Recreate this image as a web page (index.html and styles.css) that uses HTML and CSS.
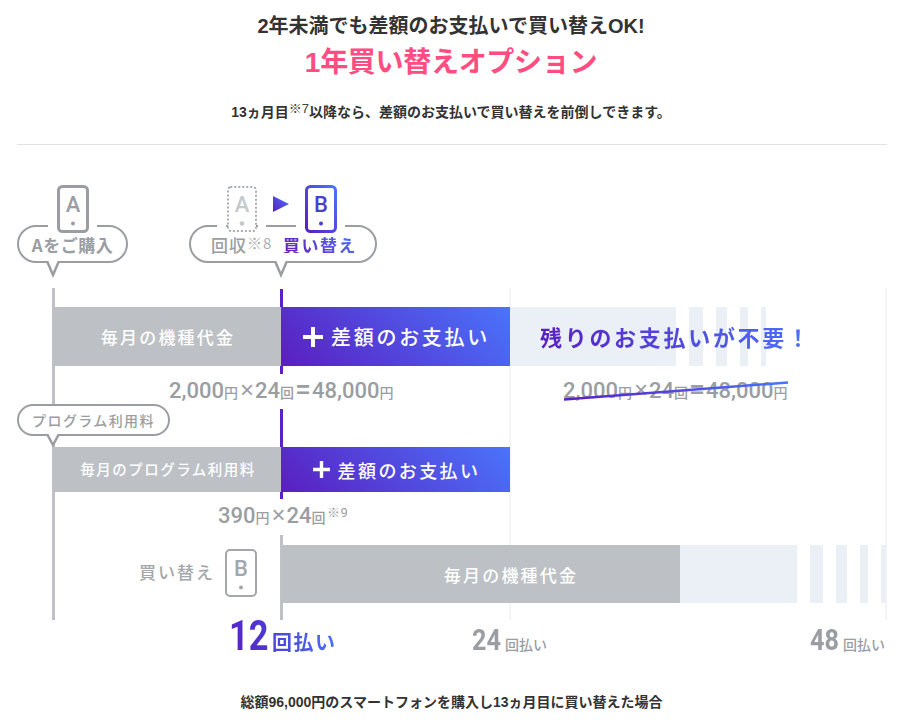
FILE: index.html
```html
<!DOCTYPE html>
<html lang="ja">
<head>
<meta charset="utf-8">
<title>1年買い替えオプション</title>
<link rel="stylesheet" href="styles.css">
</head>
<body>
<svg class="defs" width="0" height="0" aria-hidden="true">
  <defs>
    <linearGradient id="grad" x1="0" y1="1" x2="1" y2="0">
      <stop offset="0" stop-color="#5a1ec0"/>
      <stop offset="1" stop-color="#4a74fb"/>
    </linearGradient>
    <linearGradient id="gradLine" gradientUnits="userSpaceOnUse" x1="0" y1="0" x2="226" y2="0">
      <stop offset="0" stop-color="#5a1ec0"/>
      <stop offset="1" stop-color="#4a74fb"/>
    </linearGradient>
  </defs>
</svg>
<header class="intro">
  <p class="lead">2年未満でも差額のお支払いで買い替えOK!</p>
  <h1 class="title">1年買い替えオプション</h1>
  <p class="sub">13ヵ月目<sup class="note">※7</sup>以降なら、差額のお支払いで買い替えを前倒しできます。</p>
</header>
<hr class="rule">
<main class="chart">
  <i class="axis axis-start"></i>
  <i class="axis axis-swap-a"></i>
  <i class="axis axis-swap-b"></i>
  <i class="axis axis-swap-c"></i>
  <i class="axis axis-24"></i>
  <i class="axis axis-48"></i>

  <section class="heads">
    <div class="bubble bubble-a">
      <span class="bubble-text">Aをご購入</span>
      <svg class="tail" width="16" height="17" viewBox="0 0 16 17"><path d="M2 0 8 14 14 0" fill="#fff" stroke="#9a9ea3" stroke-width="2.5"/></svg>
    </div>
    <div class="phone-wrap phone-wrap-a">
      <svg class="phone" width="32" height="48" viewBox="0 0 32 48"><rect x="1.500" y="1.500" width="29" height="45" rx="4" fill="#fff" stroke="#9a9ea3" stroke-width="3"/><circle cx="16" cy="38.500" r="2" fill="#9a9ea3"/></svg>
      <span class="phone-letter letter-a">A</span>
    </div>

    <div class="bubble bubble-b">
      <span class="bubble-text recover">回収<small class="note-gray">※8</small></span>
      <span class="bubble-text buy">買い替え</span>
      <svg class="tail" width="16" height="17" viewBox="0 0 16 17"><path d="M2 0 8 14 14 0" fill="#fff" stroke="#9a9ea3" stroke-width="2.5"/></svg>
    </div>
    <div class="phone-wrap phone-wrap-old">
      <svg class="phone" width="32" height="48" viewBox="0 0 32 48"><rect x="2" y="2" width="28" height="44" rx="3" fill="#fff" stroke="#a9adb1" stroke-width="2" stroke-dasharray="0.500 3.500" stroke-linecap="round"/><circle cx="16" cy="38.500" r="2.300" fill="#c4c7ca"/></svg>
      <span class="phone-letter letter-old">A</span>
    </div>
    <svg class="arrow" width="16" height="16" viewBox="0 0 16 16"><path d="M0 0 16 8 0 16Z" fill="url(#grad)"/></svg>
    <div class="phone-wrap phone-wrap-new">
      <svg class="phone" width="32" height="48" viewBox="0 0 32 48"><rect x="1.500" y="1.500" width="29" height="45" rx="4" fill="#fff" stroke="url(#grad)" stroke-width="3"/><circle cx="16" cy="38.500" r="2" fill="#4a3fd0"/></svg>
      <span class="phone-letter letter-new">B</span>
    </div>
  </section>

  <section class="bars bars-1">
    <div class="seg seg-gray"><span class="seg-label">毎月の機種代金</span></div>
    <div class="seg seg-grad"><svg class="plus" width="20" height="20" viewBox="0 0 20 20"><path d="M8 0h4v8h8v4h-8v8H8v-8H0V8h8Z" fill="#fff"/></svg><span class="seg-label seg-label-lg">差額のお支払い</span></div>
    <div class="fade">
      <i class="stripe s166"></i><i class="stripe s14"></i><i class="stripe s11"></i><i class="stripe s8"></i><i class="stripe s5"></i>
      <strong class="no-more">残りのお支払いが不要！</strong>
    </div>
  </section>

  <section class="amounts amounts-1">
    <p class="amount"><b>2,000</b><small>円</small><span class="op">×</span><b>24</b><small>回</small><span class="op op-eq">=</span><b>48,000</b><small>円</small></p>
    <p class="amount amount-struck"><b>2,000</b><small>円</small><span class="op">×</span><b>24</b><small>回</small><span class="op op-eq">=</span><b>48,000</b><small>円</small>
      <svg class="strike" width="226" height="20" viewBox="0 0 226 20"><path d="M1 18.500 225 1.500" fill="none" stroke="url(#gradLine)" stroke-width="2.500"/></svg>
    </p>
  </section>

  <section class="fee-head">
    <div class="bubble bubble-fee">
      <span class="bubble-text fee-text">プログラム利用料</span>
      <svg class="tail" width="16" height="13" viewBox="0 0 16 13"><path d="M2 0 8 11 14 0" fill="#fff" stroke="#9a9ea3" stroke-width="2.5"/></svg>
    </div>
  </section>

  <section class="bars bars-2">
    <div class="seg seg-gray"><span class="seg-label seg-label-sm">毎月のプログラム利用料</span></div>
    <div class="seg seg-grad seg-grad-sm"><svg class="plus" width="17" height="17" viewBox="0 0 20 20"><path d="M8 0h4v8h8v4h-8v8H8v-8H0V8h8Z" fill="#fff"/></svg><span class="seg-label seg-label-md">差額のお支払い</span></div>
  </section>

  <section class="amounts amounts-2">
    <p class="amount"><b>390</b><small>円</small><span class="op">×</span><b>24</b><small>回</small><sup class="amount-note">※9</sup></p>
  </section>

  <section class="bars bars-3">
    <div class="swap-label">
      <span class="swap-text">買い替え</span>
      <span class="phone-inline">
        <svg class="phone" width="32" height="48" viewBox="0 0 32 48"><rect x="1" y="1" width="30" height="46" rx="4" fill="#fff" stroke="#a3a7ab" stroke-width="2"/><circle cx="16" cy="38.500" r="2" fill="#a3a7ab"/></svg>
        <span class="phone-letter letter-plain">B</span>
      </span>
    </div>
    <div class="seg seg-gray seg-long"><span class="seg-label">毎月の機種代金</span></div>
    <div class="fade fade-long">
      <i class="stripe s117"></i><i class="stripe s13"></i><i class="stripe s11"></i><i class="stripe s8"></i><i class="stripe s5"></i>
    </div>
  </section>

  <section class="ticks">
    <p class="tick tick-12"><b>12</b><span>回払い</span></p>
    <p class="tick tick-24"><b>24</b><span>回払い</span></p>
    <p class="tick tick-48"><b>48</b><span>回払い</span></p>
  </section>
</main>
<p class="caption">総額96,000円のスマートフォンを購入し13ヵ月目に買い替えた場合</p>
</body>
</html>
```

FILE: styles.css
```css
* { box-sizing: border-box; }
html, body { margin: 0; padding: 0; }
body {
  width: 915px;
  height: 721px;
  overflow: hidden;
  background: #fff;
  color: #333;
  font-family: "Liberation Sans", "Noto Sans CJK JP", sans-serif;
}
p, h1 { margin: 0; }
.defs { position: absolute; }

.intro { width: 902px; text-align: center; padding-top: 13px; }
.lead { font-size: 20px; line-height: 26px; font-weight: 700; color: #333; }
.title { font-size: 28px; line-height: 36px; margin-top: 6px; font-weight: 700; color: #ff4d82; letter-spacing: -.3px; }
.sub { font-size: 14px; line-height: 20px; margin-top: 21px; font-weight: 700; color: #333; }
.note { font-size: 13px; font-weight: 400; line-height: 0; color: #444; vertical-align: 4px; }
.rule { height: 1px; border: 0; background: #e2e2e2; margin: 22px 28px 0 17px; }

.chart {
  position: relative;
  font-family: "Noto Sans CJK JP", sans-serif;
  color: #9a9ea3;
}
.axis { position: absolute; display: block; width: 2.5px; }
.axis-start { left: 52px; top: 143px; height: 332px; background: #bec2c6; }
.axis-swap-a { left: 280px; top: 144px; height: 85px; background: #5a22c6; }
.axis-swap-b { left: 280px; top: 264px; height: 90px; background: #5a22c6; }
.axis-swap-c { left: 280px; top: 390px; height: 85px; background: #bec2c6; }
.axis-24 { left: 509px; top: 143px; height: 332px; width: 2px; background: #f2f4f9; }
.axis-48 { left: 885px; top: 143px; height: 332px; width: 2px; background: #f2f4f9; }

.heads { position: relative; height: 162px; }
.bubble {
  position: absolute;
  background: #fff;
  border: 2.5px solid #9a9ea3;
  border-radius: 19px;
  display: flex;
  align-items: center;
}
.tail { position: absolute; display: block; }
.bubble-a { left: 17px; top: 80px; width: 111px; height: 38px; justify-content: center; }
.bubble-a .tail { left: 26px; top: 33.500px; }
.bubble-b { left: 189px; top: 80px; width: 188px; height: 38px; }
.bubble-b .tail { left: 82px; top: 33.500px; }
.bubble-text { font-size: 17px; font-weight: 700; line-height: 1; letter-spacing: .5px; position: relative; z-index: 1; }
.recover { margin-left: 20px; width: 72px; letter-spacing: 1px; white-space: nowrap; font-weight: 500; }
.note-gray { font-size: 15px; font-weight: 400; vertical-align: 3px; line-height: 0; color: #aaaeb2; }
.buy {
  letter-spacing: 1.500px;
  background: linear-gradient(45deg, #6a1bb0, #4a74fb);
  -webkit-background-clip: text;
  background-clip: text;
  color: transparent;
}
.phone-wrap { position: absolute; top: 40px; height: 48px; width: 32px; }
.phone-wrap::before, .phone-wrap::after { content: ""; position: absolute; top: 36px; height: 8px; width: 9px; background: #fff; }
.phone-wrap::before { left: -9px; }
.phone-wrap::after { right: -8px; width: 8px; }
.phone-wrap-a { left: 57px; }
.phone-wrap-old { left: 226px; }
.phone-wrap-new { left: 305px; }
.phone { display: block; }
.phone-letter {
  position: absolute;
  left: 0; right: 0; top: 7px;
  text-align: center;
  font: 500 22px/26px Roboto, sans-serif;
}
.letter-a { color: #9a9ea3; }
.letter-old { color: #c6c9cc; }
.letter-new { color: #4a3fd0; }
.letter-plain { color: #a3a7ab; }
.arrow { position: absolute; left: 273px; top: 51px; }

.bars { display: grid; grid-template-columns: 53px 228px 229px 1fr; position: relative; }
.bars-1 { height: 59px; }
.bars-2 { height: 45px; }
.bars-3 { height: 58px; grid-template-columns: 53px 228px 399px 1fr; }
.seg { display: flex; align-items: center; justify-content: center; color: #fff; }
.seg-gray { grid-column: 2; background: #bdc1c5; }
.seg-grad { grid-column: 3; gap: 8px; background: linear-gradient(45deg, #5a1ec0, #4a74fb); }
.seg-label { font-size: 17px; line-height: 1; letter-spacing: 2.200px; font-weight: 500; margin-right: -2px; }
.seg-label-lg { font-size: 20px; letter-spacing: 2.700px; }
.seg-label-sm { font-size: 14.500px; letter-spacing: 1.500px; }
.seg-label-md { font-size: 18px; letter-spacing: 2.400px; }
.plus { display: block; flex: none; }

.fade { grid-column: 4; position: relative; display: flex; gap: 13px; }
.stripe { display: block; background: #ebf0f7; }
.s166 { width: 166px; }
.s117 { width: 117px; }
.s14 { width: 14px; }
.s13 { width: 13px; }
.s11 { width: 11px; }
.s8 { width: 8px; }
.s5 { width: 5px; }
.no-more {
  position: absolute;
  left: 30px; top: 13px;
  font-size: 22px;
  line-height: 32px;
  font-weight: 700;
  letter-spacing: 2.700px;
  white-space: nowrap;
  background: linear-gradient(75deg, #5a1ec0, #4a74fb);
  -webkit-background-clip: text;
  background-clip: text;
  color: transparent;
}

.amounts { display: grid; grid-template-columns: 510px 1fr; }
.amounts-1 { height: 42px; padding-top: 11px; }
.amounts-2 { height: 53px; padding-top: 10px; }
.amount { position: relative; padding-left: 169px; height: 26px; white-space: nowrap; }
.amounts-2 .amount { padding-left: 218px; }
.amount b { font: 500 22px/26px Roboto, sans-serif; letter-spacing: 0; }
.amount small { font-size: 14px; line-height: 26px; font-weight: 500; }
.amount .op { font: 400 24px/26px "Liberation Sans", sans-serif; margin: 0 1px 0 2px; }
.amount .op-eq { margin: 0 2px; font-weight: 700; }
.amount-note { font: 400 13px/0 Roboto, sans-serif; vertical-align: 6px; letter-spacing: 1px; margin-left: 1px; }
.amount-struck { padding-left: 53px; }
.strike { position: absolute; left: 53px; top: 4px; display: block; }

.fee-head { position: relative; height: 39px; }
.bubble-fee { left: 17px; top: -4px; width: 153px; height: 32px; justify-content: center; border-radius: 16px; }
.bubble-fee .tail { left: 26px; top: 27.500px; }
.fee-text { font-size: 14px; letter-spacing: 1.400px; font-weight: 500; }

.swap-label {
  grid-column: 1 / 3;
  display: flex;
  align-items: center;
  padding: 0 24px 0 139px;
  gap: 10px;
}
.swap-text { font-size: 17px; letter-spacing: 2px; font-weight: 500; white-space: nowrap; line-height: 1; color: #a3a7ab; margin-top: -6px; }
.phone-inline { position: relative; display: block; flex: none; margin-top: -3px; }
.seg-long { grid-column: 3; padding-left: 59px; }
.fade-long { grid-column: 4; }

.ticks {
  display: grid;
  grid-template-columns: 229px 243px 338px auto;
  align-items: baseline;
  height: 74px;
  padding-top: 12px;
}
.tick { white-space: nowrap; color: #9a9ea3; }
.tick-12 { grid-column: 2; }
.tick-24 { grid-column: 3; }
.tick-48 { grid-column: 4; }
.tick b {
  display: inline-block;
  width: 29px;
  font: 700 30px/32px Roboto, sans-serif;
  transform: scaleX(.84);
  transform-origin: left center;
}
.tick span { font-size: 14px; font-weight: 500; letter-spacing: 0; margin-left: 4px; }
.tick-12 b {
  width: 50px;
  margin-right: -12px;
  font-size: 43px;
  line-height: 40px;
  font-weight: 700;
  transform: scaleX(.8);
  background: linear-gradient(60deg, #5a1ec0, #4b3fd6);
  -webkit-background-clip: text;
  background-clip: text;
  -webkit-text-fill-color: transparent;
}
.tick-12 span {
  font-size: 20px;
  font-weight: 700;
  letter-spacing: 1.500px;
  margin-left: 5px;
  background: linear-gradient(60deg, #4b3fd6, #4a74fb);
  -webkit-background-clip: text;
  background-clip: text;
  color: transparent;
}

.caption { width: 903px; text-align: center; font-size: 14px; line-height: 20px; font-weight: 700; color: #333; margin-top: 15px; }
```
